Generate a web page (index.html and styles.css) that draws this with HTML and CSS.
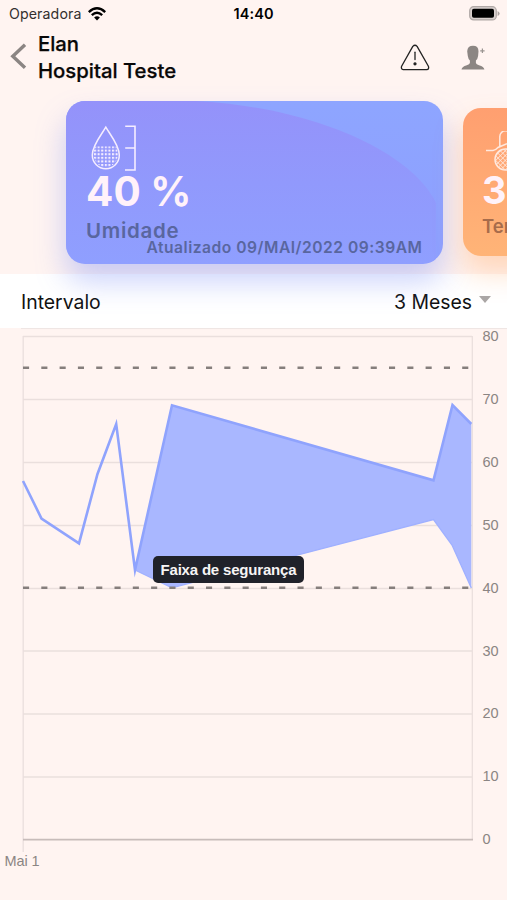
FILE: index.html
```html
<!DOCTYPE html>
<html lang="pt">
<head>
<meta charset="utf-8">
<title>Umidade</title>
<link rel="stylesheet" href="styles.css">
</head>
<body>
<div class="screen">
  <div class="status">
    <div class="carrier"><span class="operator">Operadora</span>
      <svg class="wifi" width="18" height="14" viewBox="0 0 18 14" fill="none" stroke="#000" stroke-width="2.4"><path d="M.8 5.1Q9-2.4 17.2 5.1M3.8 8.2Q9 3.5 14.2 8.2"/><path d="M6.1 10.5Q9 8 11.9 10.5L9 13.4Z" fill="#000" stroke="none"/></svg>
    </div>
    <span class="clock">14:40</span>
    <svg class="battery" width="31" height="15" viewBox="0 0 31 15"><rect x=".7" y=".7" width="26.6" height="13.2" rx="4" fill="#d9d0ce" stroke="#b0a8a6" stroke-width="1.2"/><rect x="3" y="2.8" width="22" height="9" rx="1.8" fill="#000"/><path d="M28.6 5v5q2-1 2-2.5T28.6 5Z" fill="#aaa2a0"/></svg>
  </div>
  <header class="nav">
    <svg class="back" width="17" height="27" viewBox="0 0 17 27" fill="none" stroke="#8b8583" stroke-width="3.4"><path d="M15 1.8 2.8 13.3 15 24.8"/></svg>
    <h1 class="title"><span class="name">Elan</span><span class="place">Hospital Teste</span></h1>
    <svg class="alert" width="30" height="27" viewBox="0 0 30 27" fill="none" stroke="#222" stroke-width="1.3" stroke-linecap="round" stroke-linejoin="round"><path d="M12.8 2.4Q15 .1 17.1 2.4L28.4 22.3Q29.4 25.3 26.7 25.6H3.2Q.7 25.2 1.6 22.3Z"/><path d="M15 8.2V15.6"/><circle cx="15" cy="19.8" r="1" fill="#222"/></svg>
    <svg class="person" width="24" height="25" viewBox="0 0 24 25" fill="#8c8683"><path d="M6.2 6.2Q6.6.8 12 .8T17.5 6.2L17.1 11Q16.7 14 14.9 15.4V18.1Q15.2 19.3 18 20.2 23 21.5 23.4 24.6H.5Q.9 21.5 5.8 20.2 8.6 19.3 8.9 18.1V15.4Q7.2 14 6.8 11Z"/><path d="M21.4 3.6V8M19.2 5.8H23.6" stroke="#9a9491" stroke-width="1.2"/></svg>
  </header>
  <section class="cards">
    <article class="card humidity">
      <svg class="arc" width="376" height="163" viewBox="0 0 376 163"><defs><linearGradient id="violet" x1="0" y1="0" x2="0" y2="1"><stop offset="0" stop-color="#9492fa"/><stop offset=".5" stop-color="#9199fc"/><stop offset="1" stop-color="#8f9fff"/></linearGradient></defs><path d="M0 0H130C245 6 345 50 370 102V163H0Z" fill="url(#violet)"/></svg>
      <svg class="icon" width="46" height="46" viewBox="0 0 46 46" fill="none" stroke="#f5edff" stroke-width="1.5"><defs><pattern id="mesh" width="3.6" height="3.6" patternUnits="userSpaceOnUse" x="3" y="21"><rect width="2.1" height="2.1" fill="#f5edff" stroke="none"/></pattern><clipPath id="level"><path d="M0 21.5H30V46H0Z"/></clipPath></defs><path d="M14.8 2.2C18 8 28.3 20 28.3 30A13.5 13.8 0 0 1 1.3 30C1.3 20 11.6 8 14.8 2.2Z"/><path clip-path="url(#level)" fill="url(#mesh)" stroke="none" d="M14.8 2.2C18 8 27 20 27 29.6A12.2 12.6 0 0 1 2.6 29.6C2.6 20 11.6 8 14.8 2.2Z"/><path d="M34.2 1.2H44V45H34M34.2 23H44" stroke-width="1.6"/></svg>
      <div class="value">40 %</div>
      <div class="label">Umidade</div>
      <div class="updated">Atualizado 09/MAI/2022 09:39AM</div>
    </article>
    <article class="card temperature">
      <svg class="icon" width="40" height="40" viewBox="0 0 40 40" fill="none" stroke="#ffe9df" stroke-width="1.5"><defs><pattern id="hatch" width="3.4" height="3.4" patternUnits="userSpaceOnUse" patternTransform="rotate(45)"><path d="M0 0H3.4M0 0V3.4" stroke="#ffe9df" stroke-width="1.4"/></pattern></defs><path d="M0 19.5H7Q9.5 19.2 12 16.5L21 12.8M13.8 16V5.5A5.7 5.7 0 0 1 25.2 5.5V17"/><circle cx="19.5" cy="28.5" r="10.5" fill="url(#hatch)"/></svg>
      <div class="value">36 °C</div>
      <div class="label">Temperatura</div>
    </article>
  </section>
  <div class="interval"><span class="interval-label">Intervalo</span><span class="choice">3 Meses</span><span class="caret"></span></div>
  <svg class="chart" width="507" height="572" viewBox="0 328 507 572">
    <path class="divider" d="M21 328.6H507"/>
    <g class="grid"><path d="M23 336.5H472M23 399.5H472M23 462.5H472M23 525.5H472M23 588.5H472M23 651H472M23 714H472M23 777H472"/><path d="M23.2 336V852M472.3 336V840"/></g>
    <path class="baseline" d="M23 839.7H473"/>
    <path class="area" d="M135 570 172 405.3 433.5 480.3 452.5 405 471.3 424V588L452 545 433.5 519.5 172 587.8Z"/>
    <path class="line lower" d="M135 570 172 587.8 433.5 519.5 452 545 471.3 588"/>
    <path class="line" d="M23 481 41.5 518.5 79 543.3 97.5 474 116.2 424 135 570 172 405.3 433.5 480.3 452.5 405 471.3 424"/>
    <path class="limit" d="M23 367.7H472M23 587.8H472"/>
    <rect class="tip" x="153" y="556" width="151" height="27" rx="5"/>
    <text class="tip-text" x="160.5" y="574.5" textLength="136">Faixa de segurança</text>
    <g class="ticks"><text x="482.5" y="341">80</text><text x="482.5" y="404">70</text><text x="482.5" y="467">60</text><text x="482.5" y="530">50</text><text x="482.5" y="593">40</text><text x="482.5" y="656">30</text><text x="482.5" y="718">20</text><text x="482.5" y="781">10</text><text x="482.5" y="844">0</text><text x="4.5" y="866" textLength="35">Mai 1</text></g>
  </svg>
</div>
</body>
</html>
```
FILE: styles.css
```css
* { box-sizing: border-box; }
body { margin: 0; font-family: Inter, "Liberation Sans", sans-serif; color: #111; background: #fff4f1; }
svg { display: block; flex-shrink: 0; }
.screen { width: 507px; height: 900px; overflow: hidden; background: #fff4f1; }

.status { display: grid; grid-template-columns: 1fr auto 1fr; align-items: center; height: 27px; padding: 0 7px 0 9px; }
.carrier { display: flex; align-items: center; gap: 6px; font-size: 14.2px; letter-spacing: .1px; color: #332f2e; }
.clock { margin-left: -2px; font-size: 14.5px; font-weight: 600; color: #000; letter-spacing: .1px; }
.battery { justify-self: end; }

.nav { display: flex; align-items: flex-start; height: 61px; padding: 3px 22px 0 10px; }
.back { margin-top: 13px; }
.title { display: flex; flex-direction: column; flex: 1; margin: 0 0 0 11px; font-size: 20.3px; line-height: 27px; font-weight: 500; color: #080707; -webkit-text-stroke: .25px #080707; }
.alert { margin: 14px 31px 0 0; }
.person { margin-top: 15px; }

.cards { display: flex; gap: 20.5px; height: 186px; padding: 12.5px 0 0 66px; }
.card { position: relative; flex-shrink: 0; }
.humidity { width: 376.5px; height: 162.5px; padding: 24.5px 20px 0; border-radius: 19px; background: linear-gradient(#8ea5ff, #8d9fff); box-shadow: 0 18px 30px rgba(120, 140, 245, .4); }
.arc { position: absolute; inset: 0; border-radius: 19px; }
.humidity > :not(.arc) { position: relative; }
.humidity .icon { margin-left: 5px; }
.value { font-weight: 700; color: #fff2fa; white-space: nowrap; }
.humidity .value { margin-top: -2px; font-size: 40.5px; line-height: 46px; }
.label { font-weight: 600; white-space: nowrap; }
.humidity .label { margin-top: 4px; font-size: 20.5px; line-height: 24px; letter-spacing: .7px; color: #59669f; }
.updated { margin-top: -5px; font-size: 15.6px; line-height: 20px; font-weight: 600; letter-spacing: .52px; white-space: nowrap; text-align: right; color: #59669f; }
.temperature { width: 338px; height: 147.5px; margin-top: 7.5px; padding: 23px 19px 0; border-radius: 18px; background: linear-gradient(#ff9f70, #ffb477); box-shadow: 0 16px 28px rgba(255, 160, 90, .36); }
.temperature .icon { margin-left: 4px; }
.temperature .value { margin-top: -2px; font-size: 38px; line-height: 42px; }
.temperature .label { margin-top: 4px; font-size: 18.5px; line-height: 22px; color: #a76c4b; }

.interval { display: flex; align-items: center; height: 54px; padding: 1px 16px 0 21px; font-size: 19.4px; background: #fff; }
.interval-label { flex: 1; }
.caret { width: 12px; height: 7px; margin: -4px 0 0 7px; background: #aaa6a5; clip-path: polygon(0 0, 100% 0, 50% 100%); }

.divider { stroke: #eee5e3; stroke-width: 1; }
.grid { fill: none; stroke: #eadfdd; stroke-width: 1.3; }
.baseline { stroke: #c7bcba; stroke-width: 1.7; }
.area { fill: #a9b7ff; }
.line { fill: none; stroke: #8fa3fd; stroke-width: 2.6; stroke-linejoin: miter; stroke-miterlimit: 8; }
.lower { stroke: #9fb0ff; stroke-width: 1.3; }
.limit { fill: none; stroke: #857e7c; stroke-width: 2.6; stroke-dasharray: 6.1 12.2; }
.tip { fill: #20222a; }
.tip-text { font: 700 15px "Liberation Sans", sans-serif; fill: #f7f5f5; }
.ticks { font: 14.5px "Liberation Sans", sans-serif; fill: #8b8583; }
```
